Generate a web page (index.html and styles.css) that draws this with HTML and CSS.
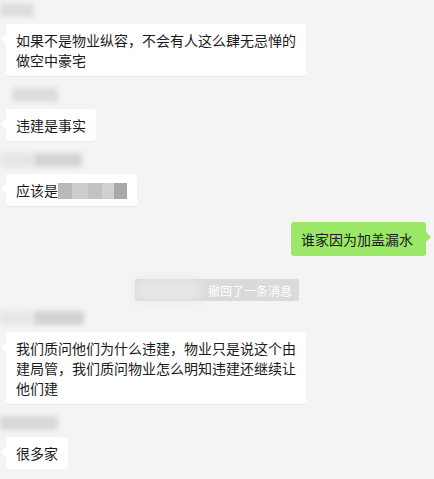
FILE: index.html
```html
<!DOCTYPE html>
<html lang="zh-CN">
<head>
    <meta charset="UTF-8">
    <title>聊天记录</title>
    <link rel="stylesheet" href="styles.css">
</head>
<body>

<div class="chat">
    <div class="msg first">
        <div class="name"><span class="blur b1"></span></div>
        <div class="bubble">如果不是物业纵容，不会有人这么肆无忌惮的做空中豪宅</div>
    </div>

    <div class="msg">
        <div class="name"><span class="blur b2"></span></div>
        <div class="bubble">违建是事实</div>
    </div>

    <div class="msg">
        <div class="name"><span class="blur b3"></span><span class="blur b3d"></span></div>
        <div class="bubble">应该是<span class="mosaic"><i class="m1"></i><i class="m2"></i><i class="m3"></i><i class="m4"></i><i class="m5"></i></span></div>
    </div>

    <div class="msg mine">
        <div class="bubble green">谁家因为加盖漏水</div>
    </div>

    <div class="recall">
        <span class="blur rname"></span>
        <span class="recall-text">撤回了一条消息</span>
    </div>

    <div class="msg fourth">
        <div class="name"><span class="blur b3"></span><span class="blur b4d"></span></div>
        <div class="bubble">我们质问他们为什么违建，物业只是说这个由建局管，我们质问物业怎么明知违建还继续让他们建</div>
    </div>

    <div class="msg">
        <div class="name"><span class="blur b5"></span></div>
        <div class="bubble">很多家</div>
    </div>
</div>

</body>
</html>
```

FILE: styles.css
```css
body {
    margin: 0;
    background: #f4f4f4;
    font-family: "Noto Sans CJK SC", "Microsoft YaHei", sans-serif;
    color: #1a1a1a;
    overflow: hidden;
}
.chat {
    display: flex;
    flex-direction: column;
    padding-top: 1px;
}
.msg {
    display: flex;
    flex-direction: column;
    align-items: flex-start;
    gap: 6px;
    margin-top: 10px;
    padding-left: 6px;
}
.msg.first {
    margin-top: 0;
}
.msg.fourth {
    margin-top: 8px;
}
.msg.mine {
    align-items: flex-end;
    padding-left: 0;
    padding-right: 8px;
    margin-top: 16px;
}
.name {
    height: 17px;
    display: flex;
    align-items: center;
    margin-left: -6px;
}
.blur {
    display: inline-block;
    height: 14px;
    background: #dcdcdc;
    filter: blur(2.5px);
}
.b1 { width: 34px; background: #dedede; }
.b2 { width: 46px; margin-left: 12px; background: #dcdcdc; }
.b3 { width: 34px; background: #e6e6e6; }
.b3d { width: 48px; background: #d4d4d4; }
.b4d { width: 50px; background: #d2d2d2; }
.b5 { width: 58px; background: #d8d8d8; }

.bubble {
    position: relative;
    max-width: 280px;
    padding: 6px 10px;
    background: #fff;
    border-radius: 3px;
    font-size: 14px;
    line-height: 20px;
    box-shadow: 0 1px 1px rgba(0, 0, 0, 0.05);
}
.bubble::before {
    content: "";
    position: absolute;
    left: -5px;
    top: 10px;
    border-style: solid;
    border-width: 5px 5px 5px 0;
    border-color: transparent #fff transparent transparent;
}
.bubble.green {
    background: #9be767;
    padding: 7px 13px 7px 10px;
    box-shadow: none;
}
.bubble.green::before {
    left: auto;
    right: -5px;
    border-width: 5px 0 5px 5px;
    border-color: transparent transparent transparent #9be767;
}
.mosaic {
    display: inline-flex;
    vertical-align: -3px;
    height: 16px;
}
.mosaic i {
    display: inline-block;
    height: 16px;
}
.m1 { width: 14px; background: #b9b9b9; }
.m2 { width: 16px; background: #cdcdcd; }
.m3 { width: 14px; background: #c2c2c2; }
.m4 { width: 12px; background: #d0d0d0; }
.m5 { width: 13px; background: #a8a8a8; }

.recall {
    align-self: center;
    display: flex;
    align-items: center;
    margin-top: 23px;
    height: 22px;
    background: #dadada;
    border-radius: 2px;
    padding-right: 7px;
    font-size: 12px;
}
.rname {
    width: 66px;
    height: 20px;
    background: #e6e6e6;
    filter: blur(4px);
    margin-right: 7px;
}
.recall-text {
    color: #fff;
}
```
